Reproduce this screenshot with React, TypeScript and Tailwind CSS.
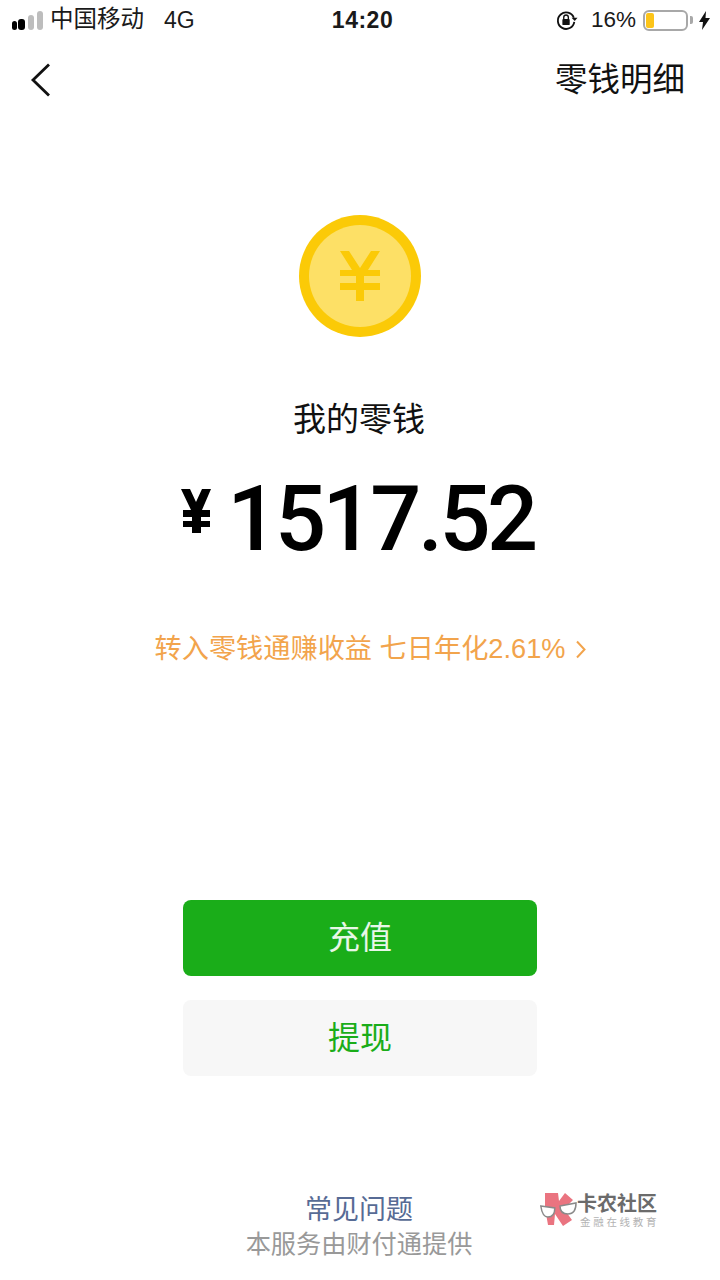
const cjk = "font-['Liberation_Sans','Noto_Sans_CJK_SC',sans-serif]";

function StatusBar() {
  return (
    <div className="flex h-[40px] items-center justify-between pl-[12px] pr-[10px] text-[23.500px] text-[#1a1a1a]">
      <div className="flex flex-1 items-center">
        <div className="flex h-[20px] items-end">
          <span className="h-[9px] w-[5px] rounded-[3px] bg-black" />
          <span className="ml-[1px] h-[11px] w-[7px] rounded-[3px] bg-black" />
          <span className="ml-[3px] h-[15px] w-[6px] rounded-[3px] bg-[#bdbdbd]" />
          <span className="ml-[3px] h-[19px] w-[6px] rounded-[3px] bg-[#bdbdbd]" />
        </div>
        <span className="ml-[7px] whitespace-nowrap">中国移动</span>
        <span className="ml-[20px] text-[23px]">4G</span>
      </div>
      <span className="ml-[3px] text-[23px] font-bold tracking-[0.5px]">14:20</span>
      <div className="flex flex-1 items-center justify-end">
        <svg width="23" height="22" viewBox="0 0 24 24" fill="none">
          <path d="M20 9.5A9 9 0 1 0 20.5 14" stroke="#111" strokeWidth="2" />
          <path d="M17.5 9.5h6.500l-3 3.500z" fill="#111" />
          <rect x="7.5" y="11" width="8" height="6.5" rx="1" fill="#111" />
          <path d="M9 11V9a2.5 2.5 0 0 1 5 0v2" stroke="#111" strokeWidth="1.5" />
        </svg>
        <span className="ml-[13px] text-[22.500px]">16%</span>
        <div className="ml-[7px] flex h-[21px] w-[45px] items-center rounded-[6px] border-2 border-[#a8a8a8] pl-[1px]">
          <span className="h-[15px] w-[8px] rounded-[2px] bg-[#fcc419]" />
        </div>
        <span className="ml-[2px] h-[8px] w-[3px] rounded-r-[2px] bg-[#a8a8a8]" />
        <svg className="ml-[6px]" width="11" height="19" viewBox="0 0 11 19">
          <path d="M7 0L0 11h4l-1 8 8-12H6.500z" fill="#111" />
        </svg>
      </div>
    </div>
  );
}

function Coin() {
  return (
    <div className="flex h-[122px] w-[122px] items-center justify-center rounded-full bg-[#fbca07]">
      <div className="flex h-[102px] w-[102px] items-center justify-center rounded-full bg-[#fde066]">
        <svg width="40" height="50" viewBox="0 0 40 50" fill="#fbca07">
          <path d="M0 0h9l11 17L31 0h9L28 19h12v6H24v7h16v7H24v11h-8V39H0v-7h16v-7H0v-6h12z" />
        </svg>
      </div>
    </div>
  );
}

function Watermark() {
  return (
    <div className="absolute left-[540px] top-[1192px] flex items-start">
      <svg width="37" height="36" viewBox="0 0 37 36">
        <path d="M5 1h13l1 8 6-8 8 7-9 9 8 11-9 6-8-12-1 11H8L5 16z" fill="#ea7480" />
        <path d="M0.800 14l14 2c0 6-2 9-7 9-4 0-6-4-7-11z" fill="#fff" stroke="#8a8a8a" strokeWidth="1.500" />
        <path d="M20 14l16-3c0 7-3 11-8 11-5 0-8-3-8-8z" fill="#fff" stroke="#8a8a8a" strokeWidth="1.500" />
      </svg>
      <div className="flex flex-col">
        <span className="text-[20px] font-bold leading-[24px] text-[#6b6b6b]">卡农社区</span>
        <span className="ml-[3px] text-[10.500px] leading-[13px] tracking-[2.700px] text-[#b3b3b3]">金融在线教育</span>
      </div>
    </div>
  );
}

export default function App() {
  return (
    <div className={`relative h-[1280px] w-[720px] overflow-hidden bg-white ${cjk}`}>
      <StatusBar />
      <div className="flex h-[80px] items-center justify-between pl-[26px] pr-[35px]">
        <svg width="26" height="36" viewBox="0 0 26 36" fill="none">
          <path d="M23 2.500 L7 18 L23 33.500" stroke="#111" strokeWidth="2.800" />
        </svg>
        <span className="text-[32.500px] text-[#111]">零钱明细</span>
      </div>
      <div className="flex flex-col items-center">
        <div className="mt-[95px]">
          <Coin />
        </div>
        <div className="mt-[60px] -translate-x-[1px] text-[33px] leading-[46px] text-[#111]">我的零钱</div>
        <div className="mt-[26px] flex h-[96px] -translate-x-[2px] items-start">
          <svg className="mt-[20px]" width="30" height="44" viewBox="0 0 30 44" fill="#000">
            <path d="M0 0h9l6 13 6-13h9L21 21h8v7H20v4h9v6H20v6h-9v-6H2v-6h9v-4H2v-7h8z" />
          </svg>
          <span className="ml-[16px] mt-[3px] font-['Roboto',sans-serif] text-[90px] font-medium leading-[96px] tracking-[-3.500px] text-black">1517.52</span>
        </div>
        <div className="mt-[64px] flex items-center text-[27.200px] leading-[40px] text-[#f2a44c]">
          <span>转入零钱通赚收益 七日年化2.61%</span>
          <svg className="ml-[11px] -mr-[21px]" width="10" height="19" viewBox="0 0 10 19" fill="none">
            <path d="M1 1.500 L8.500 9.500 L1 17.500" stroke="#f2a44c" strokeWidth="2" />
          </svg>
        </div>
        <button className="mt-[231px] flex h-[76px] w-[354px] items-center justify-center rounded-[8px] bg-[#1aad19] text-[32px] text-white/90">充值</button>
        <button className="mt-[24px] flex h-[76px] w-[354px] items-center justify-center rounded-[8px] bg-[#f7f7f7] text-[32px] text-[#1aad19]">提现</button>
        <div className="mt-[114px] -translate-x-[1px] text-[27px] leading-[40px] text-[#576b95]">常见问题</div>
        <div className="-mt-[2px] -translate-x-[1px] text-[25.200px] leading-[32px] text-[#999]">本服务由财付通提供</div>
      </div>
      <Watermark />
    </div>
  );
}
